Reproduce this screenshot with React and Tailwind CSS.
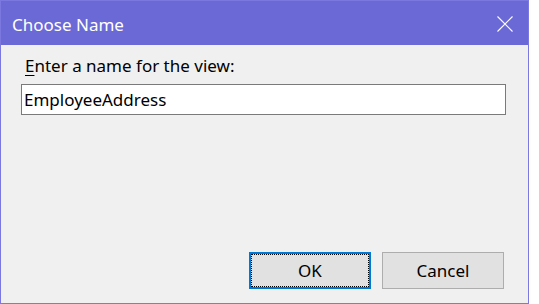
export default function App() {
  return (
    <div className="w-[539px] h-[304px] bg-white" style={{ fontFamily: '"Noto Sans", "Open Sans", sans-serif' }}>
      <div className="w-[529px] h-[304px] border border-[#7b79e0] bg-[#f0f0f0] flex flex-col">
        {/* Title bar */}
        <div className="h-[44px] shrink-0 bg-[#6b69d6] flex items-start justify-between pl-[11px] pr-[15px] pt-[15px]">
          <span className="text-[17px] leading-[17px] text-white">Choose Name</span>
          <svg width="16" height="16" viewBox="0 0 16 16" className="text-white -mt-[0.5px]">
            <path d="M0.5 0.5 L15.5 15.5 M15.5 0.5 L0.5 15.5" stroke="currentColor" strokeWidth="1.1" fill="none" />
          </svg>
        </div>

        {/* Body */}
        <div className="flex-1 flex flex-col pl-[20px] pt-[12px] pb-[14px]">
          <label className="text-[17px] leading-[17px] text-black pl-[4px]">
            <span className="underline underline-offset-[3px]">E</span>nter a name for the view:
          </label>
          <div className="mt-[10px] w-[485px] h-[31px] bg-white border border-[#7a7a7a] flex items-center pl-[2px]">
            <span className="text-[17px] leading-[17px] text-black">EmployeeAddress</span>
          </div>

          <div className="flex-1" />

          <div className="flex gap-[11px] pl-[228px]">
            <button className="w-[122px] h-[37px] bg-[#e1e1e1] border-2 border-[#0078d7] flex">
              <span className="flex-1 flex items-center justify-center border border-dotted border-black text-[17px] leading-[17px] text-black">
                OK
              </span>
            </button>
            <button className="w-[122px] h-[37px] bg-[#e1e1e1] border border-[#adadad] flex items-center justify-center text-[17px] leading-[17px] text-black">
              Cancel
            </button>
          </div>
        </div>
      </div>
    </div>
  );
}
